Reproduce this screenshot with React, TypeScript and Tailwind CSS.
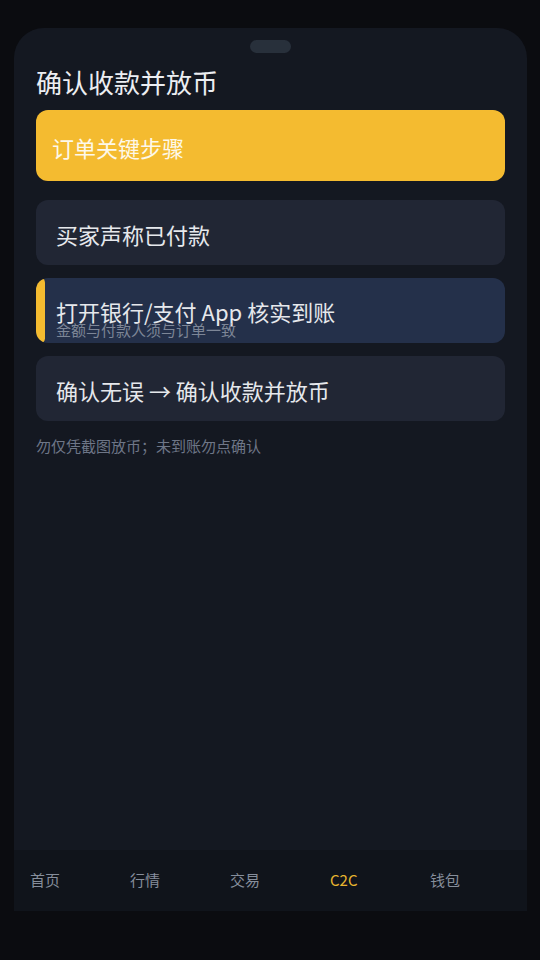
export default function App() {
  const tabs = ["首页", "行情", "交易", "C2C", "钱包"];
  return (
    <div
      className="w-[540px] h-[960px] bg-[#0b0c10] pt-[28px] overflow-hidden"
      style={{ fontFamily: '"Noto Sans CJK SC", "Noto Sans", sans-serif' }}
    >
      <div className="ml-[14px] w-[513px] h-[883px] bg-[#141821] rounded-t-[30px] flex flex-col">
        {/* notch */}
        <div className="flex justify-center pt-[12px]">
          <div className="w-[41px] h-[13px] rounded-full bg-[#28303b]" />
        </div>

        <div className="flex-1 px-[22px]">
          <h1 className="mt-[10px] text-[26px] leading-[38px] text-[#eceef2]">确认收款并放币</h1>

          {/* header card */}
          <div className="mt-[9px] h-[71px] rounded-[12px] bg-[#f4bb30] pl-[16px] pt-[21px]">
            <span className="text-[22px] leading-[32px] text-[#fdf8ea]">订单关键步骤</span>
          </div>

          <div className="mt-[19px] flex flex-col gap-[13px]">
            <div className="h-[65px] rounded-[12px] bg-[#212634] pl-[20px] pt-[18px]">
              <div className="text-[22px] leading-[32px] text-[#e6e8ec]">买家声称已付款</div>
            </div>

            <div className="relative h-[65px] rounded-[12px] bg-[#24304a] pl-[20px] pt-[17px] overflow-hidden">
              <div className="absolute left-0 top-0 h-[65px] w-[9px] rounded-full bg-[#f4bb30]" />
              <div className="text-[22px] leading-[32px] text-[#e6e8ec]">打开银行/支付 App 核实到账</div>
              <div className="-mt-[8px] text-[15px] leading-[22px] text-[#7d8697]">金额与付款人须与订单一致</div>
            </div>

            <div className="h-[65px] rounded-[12px] bg-[#212634] pl-[20px] pt-[18px]">
              <div className="text-[22px] leading-[32px] text-[#e6e8ec]">确认无误 → 确认收款并放币</div>
            </div>
          </div>

          <p className="mt-[14px] text-[15px] leading-[22px] text-[#6e7687]">勿仅凭截图放币；未到账勿点确认</p>
        </div>

        {/* bottom nav */}
        <div className="h-[61px] bg-[#10141b] flex items-center pl-[16px]">
          {tabs.map((t) => (
            <div
              key={t}
              className={
                t === "C2C"
                  ? "w-[100px] shrink-0 text-[15px] text-[#e8b52f]"
                  : "w-[100px] shrink-0 text-[15px] text-[#868e9b]"
              }
            >
              {t}
            </div>
          ))}
        </div>
      </div>
    </div>
  );
}
